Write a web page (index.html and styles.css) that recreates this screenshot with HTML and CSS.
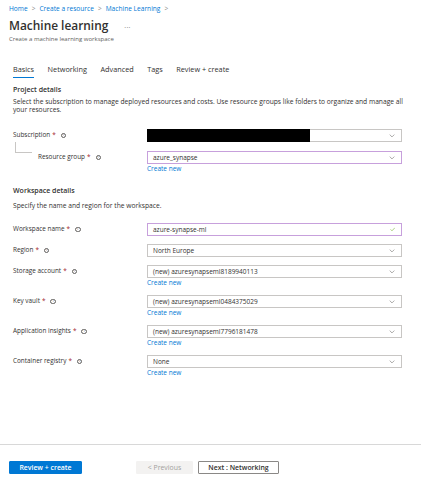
FILE: index.html
```html
<!DOCTYPE html>
<html lang="en">
<head>
<meta charset="utf-8">
<title>Machine learning</title>
<link rel="stylesheet" href="styles.css">
</head>
<body>
<div class="shell">
  <main class="main">
    <nav class="crumbs">
      <a href="#">Home</a><span class="sep">&gt;</span>
      <a href="#">Create a resource</a><span class="sep">&gt;</span>
      <a href="#">Machine Learning</a><span class="sep">&gt;</span>
    </nav>
    <div class="title-row">
      <h1 class="title">Machine learning</h1>
      <span class="more">···</span>
    </div>
    <p class="subtitle">Create a machine learning workspace</p>

    <div class="content">
      <div class="tabs">
        <span class="tab active">Basics</span>
        <span class="tab">Networking</span>
        <span class="tab">Advanced</span>
        <span class="tab">Tags</span>
        <span class="tab">Review + create</span>
      </div>

      <h2 class="section-title first">Project details</h2>
      <p class="desc first">Select the subscription to manage deployed resources and costs. Use resource groups like folders to organize and manage all your resources.</p>

      <div class="row sub">
        <label class="label">Subscription <span class="req">*</span> <span class="info">i</span></label>
        <div class="field">
          <div class="select"><span class="redact"></span><svg class="chev" viewBox="0 0 10 6"><path d="M1 1l4 4 4-4" fill="none" stroke="#605e5c" stroke-width="0.9"/></svg></div>
        </div>
      </div>
      <div class="row child">
        <span class="tree"></span>
        <label class="label">Resource group <span class="req">*</span> <span class="info">i</span></label>
        <div class="field">
          <div class="select focus"><span class="val">azure_synapse</span><svg class="chev" viewBox="0 0 10 6"><path d="M1 1l4 4 4-4" fill="none" stroke="#605e5c" stroke-width="0.9"/></svg></div>
          <a class="create" href="#">Create new</a>
        </div>
      </div>

      <h2 class="section-title second">Workspace details</h2>
      <p class="desc second">Specify the name and region for the workspace.</p>

      <div class="row ws">
        <label class="label">Workspace name <span class="req">*</span> <span class="info">i</span></label>
        <div class="field">
          <div class="select focus"><span class="val">azure-synapse-ml</span><svg class="check" viewBox="0 0 10 8"><path d="M1 4.2l2.6 2.6L9 1.2" fill="none" stroke="#57a300" stroke-width="0.9"/></svg></div>
        </div>
      </div>
      <div class="row">
        <label class="label">Region <span class="req">*</span> <span class="info">i</span></label>
        <div class="field">
          <div class="select"><span class="val">North Europe</span><svg class="chev" viewBox="0 0 10 6"><path d="M1 1l4 4 4-4" fill="none" stroke="#605e5c" stroke-width="0.9"/></svg></div>
        </div>
      </div>
      <div class="row">
        <label class="label">Storage account <span class="req">*</span> <span class="info">i</span></label>
        <div class="field">
          <div class="select"><span class="val">(new) azuresynapseml8189940113</span><svg class="chev" viewBox="0 0 10 6"><path d="M1 1l4 4 4-4" fill="none" stroke="#605e5c" stroke-width="0.9"/></svg></div>
          <a class="create" href="#">Create new</a>
        </div>
      </div>
      <div class="row">
        <label class="label">Key vault <span class="req">*</span> <span class="info">i</span></label>
        <div class="field">
          <div class="select"><span class="val">(new) azuresynapseml0484375029</span><svg class="chev" viewBox="0 0 10 6"><path d="M1 1l4 4 4-4" fill="none" stroke="#605e5c" stroke-width="0.9"/></svg></div>
          <a class="create" href="#">Create new</a>
        </div>
      </div>
      <div class="row">
        <label class="label">Application insights <span class="req">*</span> <span class="info">i</span></label>
        <div class="field">
          <div class="select"><span class="val">(new) azuresynapseml7796181478</span><svg class="chev" viewBox="0 0 10 6"><path d="M1 1l4 4 4-4" fill="none" stroke="#605e5c" stroke-width="0.9"/></svg></div>
          <a class="create" href="#">Create new</a>
        </div>
      </div>
      <div class="row">
        <label class="label">Container registry <span class="req">*</span> <span class="info">i</span></label>
        <div class="field">
          <div class="select"><span class="val">None</span><svg class="chev" viewBox="0 0 10 6"><path d="M1 1l4 4 4-4" fill="none" stroke="#605e5c" stroke-width="0.9"/></svg></div>
          <a class="create" href="#">Create new</a>
        </div>
      </div>
    </div>
  </main>

  <footer class="footer">
    <button class="btn primary">Review + create</button>
    <button class="btn disabled">&lt; Previous</button>
    <button class="btn outline">Next : Networking</button>
  </footer>
</div>
</body>
</html>
```

FILE: styles.css
```css
* { box-sizing: border-box; }
html, body { margin: 0; padding: 0; background: #fff; }
body {
  font-family: "Open Sans", "Noto Sans", sans-serif;
  color: #323130;
  width: 421px;
  height: 480px;
  overflow: hidden;
}
.shell {
  display: flex;
  flex-direction: column;
  height: 480px;
}
.main {
  flex: 1;
  padding: 4px 0 0 9px;
}
.crumbs {
  font-size: 6.6px;
  line-height: 9px;
  height: 9px;
  display: flex;
  align-items: center;
}
.crumbs a { color: #0078d4; text-decoration: none; }
.crumbs .sep { color: #8a8886; margin: 0 4px; }
.title-row {
  display: flex;
  align-items: baseline;
  margin-top: 4px;
  height: 16px;
}
.title {
  margin: 0;
  font-size: 11.9px;
  font-weight: 600;
  line-height: 16px;
  color: #323130;
}
.more {
  margin-left: 16px;
  font-size: 7px;
  color: #605e5c;
  letter-spacing: 0.2px;
}
.subtitle {
  margin: 3px 0 0;
  font-size: 6px;
  line-height: 7px;
  color: #605e5c;
}
.content {
  padding-left: 4px;
}
.tabs {
  display: flex;
  margin-top: 21px;
  height: 20px;
}
.tab {
  font-size: 7.3px;
  line-height: 10px;
  height: 10px;
  margin-right: 13.5px;
  color: #323130;
  position: relative;
}
.tab.active::after {
  content: "";
  position: absolute;
  left: 0;
  right: 0;
  top: 12.5px;
  height: 1.5px;
  background: #0078d4;
}
.section-title {
  margin: 0;
  font-size: 7px;
  font-weight: 600;
  line-height: 8px;
}
.section-title.first { margin-top: 2px; }
.section-title.second { margin-top: 14.5px; }
.desc {
  margin: 0;
  font-size: 6.7px;
  line-height: 7.5px;
  width: 392px;
  color: #323130;
}
.desc.first { margin-top: 4.25px; }
.desc.second { margin-top: 7.25px; }
.row {
  display: grid;
  grid-template-columns: 134px 255px;
  align-items: start;
  margin-top: 8.5px;
  position: relative;
}
.row.sub { margin-top: 15.75px; }
.row.child { margin-top: 9.5px; }
.row.ws { margin-top: 13.25px; }
.row.child .label { padding-left: 25px; }
.tree {
  position: absolute;
  left: 2px;
  top: -9px;
  width: 17px;
  height: 11px;
  border-left: 1px solid #c8c6c4;
  border-bottom: 1px solid #c8c6c4;
}
.label {
  font-size: 6.4px;
  line-height: 12.5px;
  height: 12.5px;
  display: flex;
  align-items: center;
  white-space: nowrap;
}
.req { color: #a4262c; margin: 0 5px 0 2px; }
.info {
  display: inline-flex;
  align-items: center;
  justify-content: center;
  width: 5.5px;
  height: 5.5px;
  border: 0.6px solid #605e5c;
  border-radius: 50%;
  font-size: 3.8px;
  line-height: 1;
  color: #605e5c;
}
.field {
  display: flex;
  flex-direction: column;
}
.select {
  height: 12.5px;
  border: 1px solid #c8c6c4;
  display: flex;
  align-items: center;
  padding: 0 6px 0 5px;
  position: relative;
}
.select.focus { border-color: #c7a0dc; }
.val {
  flex: 1;
  font-size: 6.5px;
  color: #323130;
}
.redact {
  position: absolute;
  left: -1px;
  top: -1px;
  bottom: -1px;
  width: 163px;
  background: #000;
}
.chev {
  width: 6px;
  height: 3.5px;
  margin-left: auto;
}
.check {
  width: 5.5px;
  height: 4.5px;
  margin-left: auto;
}
.create {
  font-size: 6.5px;
  line-height: 8px;
  color: #0078d4;
  text-decoration: none;
  margin-top: 1px;
}
.footer {
  height: 36px;
  border-top: 1px solid #d8d8d8;
  display: flex;
  align-items: flex-start;
  padding: 16px 0 0 9px;
}
.btn {
  font-family: inherit;
  font-size: 6.9px;
  font-weight: 600;
  height: 12.5px;
  padding: 0;
  border-radius: 1px;
  cursor: pointer;
}
.btn.primary {
  width: 73px;
  background: #0078d4;
  border: 1px solid #0078d4;
  color: #fff;
}
.btn.disabled {
  width: 57px;
  margin-left: 54px;
  background: #f3f2f1;
  border: 1px solid #f3f2f1;
  color: #a19f9d;
  font-weight: 400;
}
.btn.outline {
  width: 81px;
  margin-left: 5px;
  background: #fff;
  border: 1px solid #8a8886;
  color: #323130;
}
```
